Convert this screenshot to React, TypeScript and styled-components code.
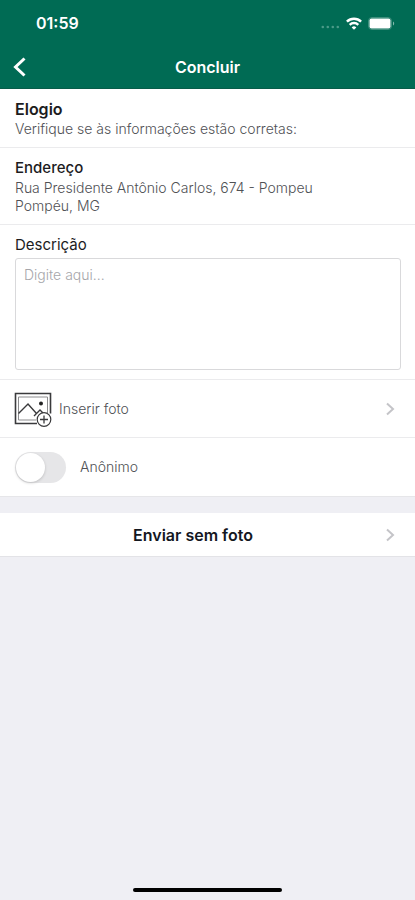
import React, { useState } from "react";
import styled, { createGlobalStyle } from "styled-components";

const GlobalStyle = createGlobalStyle`
  * { box-sizing: border-box; }
  body {
    margin: 0;
    background: #efeff4;
    color: #505155;
    font-family: Inter, "Liberation Sans", sans-serif;
    font-size: 14px;
    font-weight: 300;
    line-height: 18px;
  }
  button, input, textarea { font: inherit; color: inherit; }
`;

const Screen = styled.div`
  min-height: 100vh;
  display: flex;
  flex-direction: column;
`;

const Header = styled.header`
  background: #006b54;
  color: #fff;
  border-bottom: 1px solid #075c49;
`;

const StatusBar = styled.div`
  height: 46px;
  padding: 0 20px 0 36px;
  display: flex;
  align-items: center;
  justify-content: space-between;
`;

const Clock = styled.time`
  font-size: 16px;
  font-weight: 600;
`;

const StatusIcons = styled.div`
  display: flex;
  align-items: center;
  gap: 6px;
`;

const NavBar = styled.div`
  height: 42px;
  display: grid;
  grid-template-columns: 44px 1fr 44px;
  align-items: center;
`;

const BackButton = styled.button`
  height: 42px;
  padding: 0 0 0 12px;
  border: 0;
  background: none;
  display: flex;
  align-items: center;
  cursor: pointer;
`;

const Title = styled.h1`
  margin: 0;
  text-align: center;
  font-size: 16px;
  font-weight: 600;
`;

const Panel = styled.main`
  background: #fff;
`;

const Section = styled.section`
  padding: 11px 14px 9px 15px;
  border-bottom: 1px solid #ebebed;
`;

const Heading = styled.h2<{ $strong?: boolean }>`
  margin: 0 0 2px;
  color: #1c1c1e;
  font-size: ${(p) => (p.$strong ? 16 : 15)}px;
  font-weight: ${(p) => (p.$strong ? 600 : 500)};
`;

const Text = styled.p`
  margin: 0;
`;

const FieldLabel = styled.label`
  display: block;
  margin-bottom: 4px;
  color: #1c1c1e;
  font-size: 15px;
  font-weight: 400;
`;

const Description = styled.textarea`
  display: block;
  width: 100%;
  height: 112px;
  padding: 7px 8px;
  border: 1px solid #d9d9db;
  border-radius: 3px;
  background: #fff;
  resize: none;
  &::placeholder { color: #a6a6aa; opacity: 1; }
`;

const PhotoButton = styled.button`
  width: 100%;
  height: 58px;
  padding: 0 19px 0 14px;
  border: 0;
  border-bottom: 1px solid #ebebed;
  background: #fff;
  display: flex;
  align-items: center;
  gap: 7px;
  text-align: left;
  cursor: pointer;
`;

const Grow = styled.span`
  flex: 1;
`;

const ToggleRow = styled.label`
  height: 59px;
  padding: 0 15px;
  border-bottom: 1px solid #e6e6e9;
  display: flex;
  align-items: center;
  gap: 14px;
`;

const Switch = styled.input`
  appearance: none;
  width: 51px;
  height: 31px;
  margin: 0;
  padding: 1px;
  border-radius: 16px;
  background: #e6e6e8;
  cursor: pointer;
  &::before {
    content: "";
    display: block;
    width: 29px;
    height: 29px;
    border-radius: 50%;
    background: #fff;
    box-shadow: 0 1px 3px rgba(0, 0, 0, 0.18);
  }
  &:checked { background: #006b54; }
  &:checked::before { margin-left: 20px; }
`;

const SubmitButton = styled.button`
  width: 100%;
  height: 44px;
  margin-top: 16px;
  padding: 0 19px 0 2px;
  border: 0;
  border-bottom: 1px solid #e3e3e7;
  background: #fff;
  color: #14171f;
  display: flex;
  align-items: center;
  text-align: center;
  font-size: 16px;
  font-weight: 600;
  cursor: pointer;
`;

const HomeArea = styled.footer`
  margin-top: auto;
  padding: 8px 0;
  display: flex;
  justify-content: center;
`;

const HomeBar = styled.div`
  width: 36%;
  height: 4px;
  border-radius: 2px;
  background: #000;
`;

const Chevron = () => (
  <svg width="12" height="14" viewBox="0 0 12 14" fill="none" stroke="#c4c4c8" strokeWidth="2" aria-hidden="true">
    <path d="M3 1.5 9 7l-6 5.5" />
  </svg>
);

const SignalIcon = () => (
  <svg width="19" height="14" viewBox="0 0 19 14" fill="#4b9a88" aria-hidden="true">
    <circle cx="1.8" cy="11" r="1.3" />
    <circle cx="6.8" cy="11" r="1.3" />
    <circle cx="11.8" cy="11" r="1.3" />
    <circle cx="16.8" cy="11" r="1.3" />
  </svg>
);

const WifiIcon = () => (
  <svg width="16" height="13" viewBox="0 0 16 13" fill="none" stroke="#fff" strokeWidth="2.4" aria-hidden="true">
    <path d="M.9 4.7a10.2 10.2 0 0 1 14.2 0" />
    <path d="M3.7 7.8a6.2 6.2 0 0 1 8.6 0" />
    <path d="M8 12.8 5.7 10.4a3.3 3.3 0 0 1 4.6 0Z" fill="#fff" stroke="none" />
  </svg>
);

const BatteryIcon = () => (
  <svg width="27" height="13" viewBox="0 0 27 13" aria-hidden="true">
    <rect x=".5" y=".5" width="23" height="12" rx="3.5" fill="none" stroke="#3f8f7d" />
    <rect x="1.5" y="1.5" width="21" height="10" rx="2" fill="#fff" />
    <path d="M25 4.5c1.6.7 1.6 3.3 0 4Z" fill="#83b8ab" />
  </svg>
);

const PhotoIcon = () => (
  <svg width="38" height="36" viewBox="0 0 38 36" fill="none" stroke="#3a3a3c" aria-hidden="true">
    <path d="M23 32.5H1.5v-30h35v20" strokeWidth="1.6" />
    <path d="M22 29H4.5V6h29v16" stroke="#8c8c8e" />
    <path d="m4.5 22.5 9.5-9.5 8.5 9.5M20 25l6-6 3 3" strokeWidth="1.4" />
    <circle cx="27" cy="12.5" r="2" fill="#222" stroke="none" />
    <circle cx="30" cy="28.5" r="6.8" fill="#fff" strokeWidth="1.2" />
    <path d="M26 28.5h8M30 24.5v8" strokeWidth="1.3" />
  </svg>
);

export default function App() {
  const [description, setDescription] = useState("");
  const [anonymous, setAnonymous] = useState(false);

  return (
    <Screen>
      <GlobalStyle />
      <Header>
        <StatusBar>
          <Clock>01:59</Clock>
          <StatusIcons>
            <SignalIcon />
            <WifiIcon />
            <BatteryIcon />
          </StatusIcons>
        </StatusBar>
        <NavBar>
          <BackButton type="button" aria-label="Voltar">
            <svg width="15" height="22" viewBox="0 0 15 22" fill="none" stroke="#fff" strokeWidth="3" aria-hidden="true">
              <path d="m12.5 2.5-9 8.5 9 8.5" />
            </svg>
          </BackButton>
          <Title>Concluir</Title>
        </NavBar>
      </Header>
      <Panel>
        <Section>
          <Heading $strong>Elogio</Heading>
          <Text>Verifique se às informações estão corretas:</Text>
        </Section>
        <Section>
          <Heading>Endereço</Heading>
          <Text>Rua Presidente Antônio Carlos, 674 - Pompeu</Text>
          <Text>Pompéu, MG</Text>
        </Section>
        <Section>
          <FieldLabel htmlFor="description">Descrição</FieldLabel>
          <Description
            id="description"
            placeholder="Digite aqui..."
            value={description}
            onChange={(e) => setDescription(e.target.value)}
          />
        </Section>
        <PhotoButton type="button">
          <PhotoIcon />
          <Grow>Inserir foto</Grow>
          <Chevron />
        </PhotoButton>
        <ToggleRow>
          <Switch
            type="checkbox"
            role="switch"
            checked={anonymous}
            onChange={(e) => setAnonymous(e.target.checked)}
          />
          Anônimo
        </ToggleRow>
      </Panel>
      <SubmitButton type="button">
        <Grow>Enviar sem foto</Grow>
        <Chevron />
      </SubmitButton>
      <HomeArea>
        <HomeBar />
      </HomeArea>
    </Screen>
  );
}
